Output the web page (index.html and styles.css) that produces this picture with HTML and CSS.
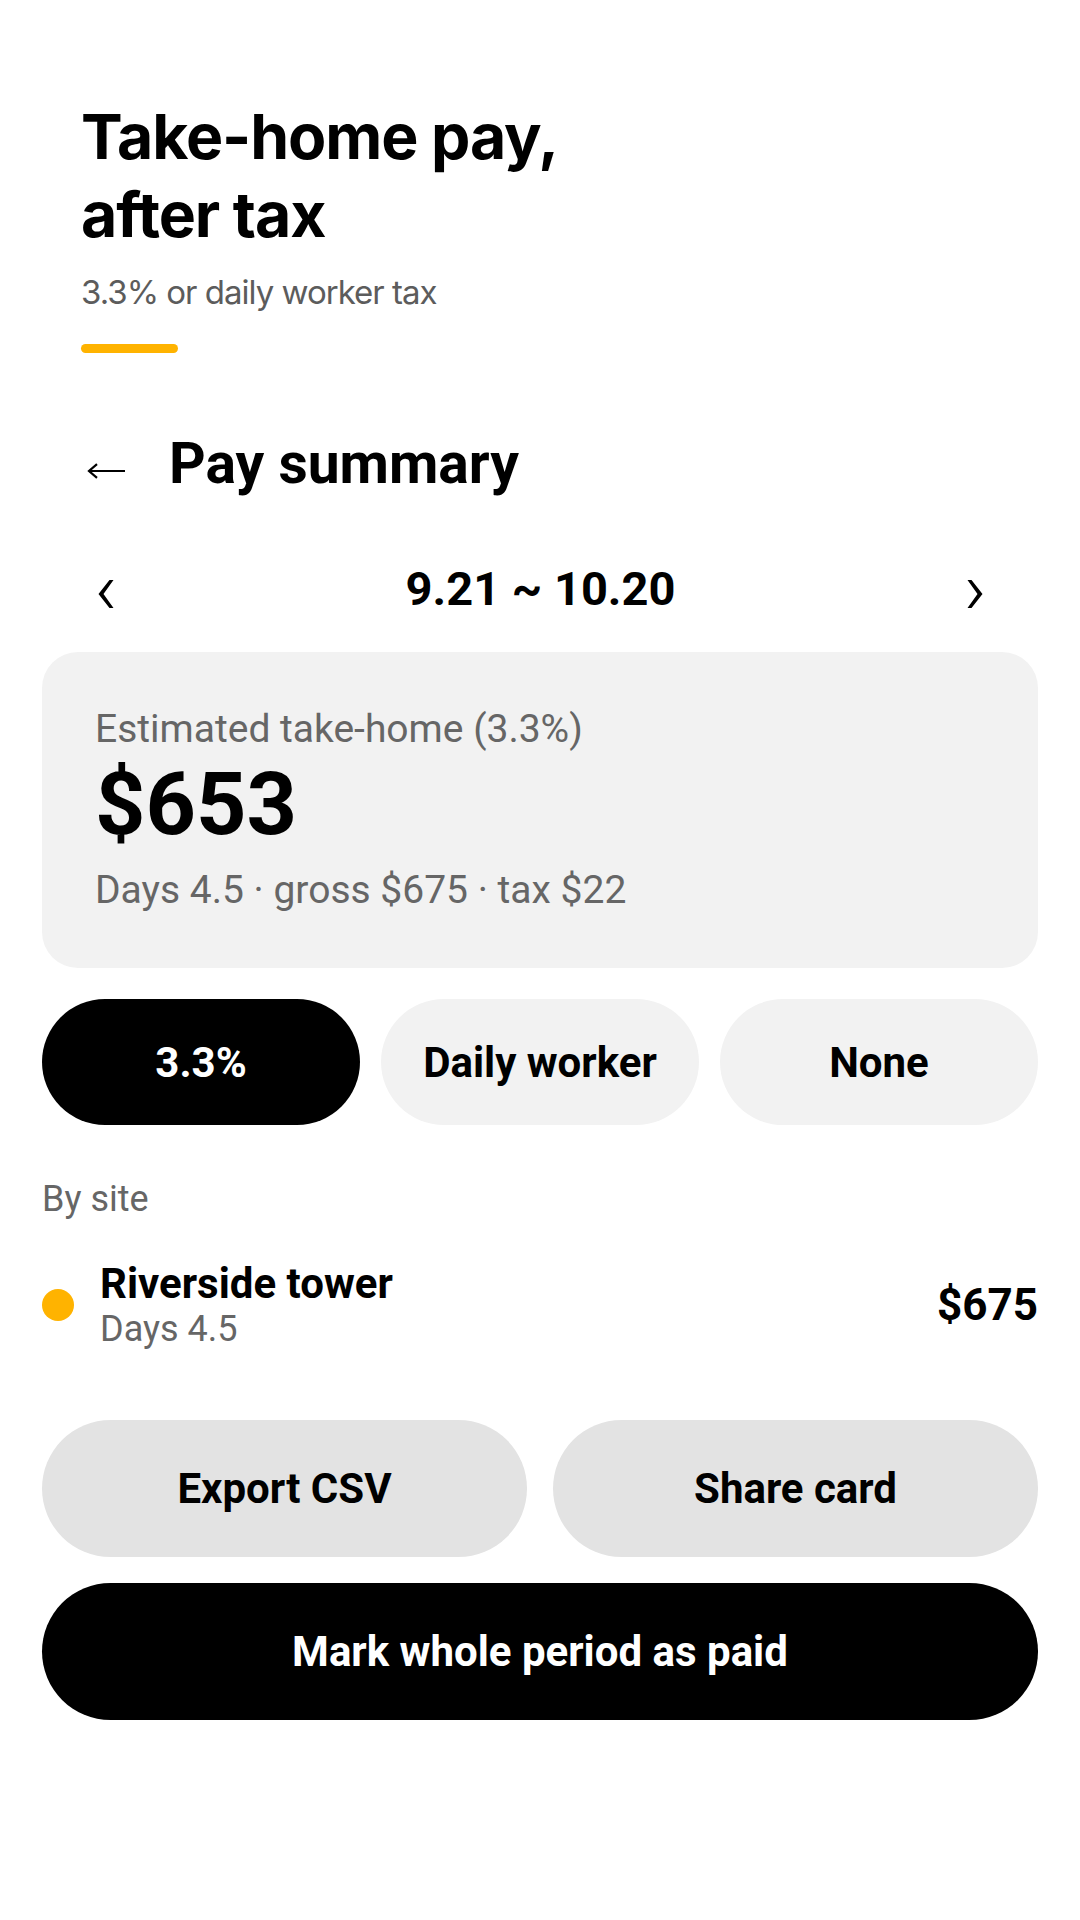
FILE: index.html
```html
<!DOCTYPE html>
<html lang="en">
<head>
<meta charset="utf-8">
<title>Pay summary</title>
<link rel="stylesheet" href="styles.css">
</head>
<body>
<div class="screen">
  <header class="hero">
    <h1 class="hero-title">Take-home pay,<br>after tax</h1>
    <p class="hero-sub">3.3% or daily worker tax</p>
    <div class="hero-bar"></div>
  </header>

  <div class="topbar">
    <svg class="back" width="38" height="16" viewBox="0 0 38 16" aria-hidden="true">
      <path d="M2 8 H38 M10 1.2 L2 8 L10 14.8" fill="none" stroke="#000" stroke-width="2.2" stroke-linecap="butt" stroke-linejoin="miter"/>
    </svg>
    <h2 class="topbar-title">Pay summary</h2>
  </div>

  <div class="period">
    <svg class="chev" width="16" height="28" viewBox="0 0 16 28" aria-hidden="true">
      <polygon points="11.5,0 15.5,0 5.5,14 15.5,28 11.5,28 0.5,14" fill="#000"/>
    </svg>
    <span class="period-label">9.21 ~ 10.20</span>
    <svg class="chev" width="16" height="28" viewBox="0 0 16 28" aria-hidden="true">
      <polygon points="4.5,0 0.5,0 10.5,14 0.5,28 4.5,28 15.5,14" fill="#000"/>
    </svg>
  </div>

  <section class="card">
    <div class="card-label">Estimated take-home (3.3%)</div>
    <div class="card-amount">$653</div>
    <div class="card-meta">Days 4.5 · gross $675 · tax $22</div>
  </section>

  <div class="tabs">
    <button class="tab tab-active">3.3%</button>
    <button class="tab">Daily worker</button>
    <button class="tab">None</button>
  </div>

  <div class="section-label">By site</div>

  <div class="site-row">
    <span class="site-dot"></span>
    <div class="site-info">
      <div class="site-name">Riverside tower</div>
      <div class="site-days">Days 4.5</div>
    </div>
    <div class="site-amount">$675</div>
  </div>

  <div class="actions">
    <button class="btn btn-secondary">Export CSV</button>
    <button class="btn btn-secondary">Share card</button>
  </div>
  <button class="btn btn-primary">Mark whole period as paid</button>
</div>
</body>
</html>
```

FILE: styles.css
```css
* { box-sizing: border-box; }

html, body {
  margin: 0;
  padding: 0;
  background: #ffffff;
}

body {
  width: 1080px;
  min-height: 1920px;
  font-family: Roboto, "Liberation Sans", sans-serif;
  color: #000;
}

.screen {
  padding: 0 42px;
  display: flex;
  flex-direction: column;
}

/* Hero */
.hero {
  padding-top: 97px;
  padding-left: 39px;
}

.hero-title {
  margin: 0;
  font-family: Inter, "Liberation Sans", sans-serif;
  font-weight: 700;
  font-size: 62.5px;
  line-height: 78px;
  letter-spacing: -1.1px;
}

.hero-sub {
  margin: 19px 0 0;
  font-family: Inter, "Liberation Sans", sans-serif;
  font-weight: 400;
  font-size: 33px;
  line-height: 40px;
  letter-spacing: -1px;
  color: #5c5c5c;
}

.hero-bar {
  margin-top: 32px;
  width: 97px;
  height: 9px;
  border-radius: 5px;
  background: #ffb300;
}

/* Top bar */
.topbar {
  margin-top: 78px;
  padding-left: 45px;
  display: flex;
  align-items: center;
  gap: 44px;
}

.back {
  display: block;
  margin-top: 14px;
}

.topbar-title {
  margin: 0;
  font-size: 57px;
  line-height: 66px;
  font-weight: 700;
}

/* Period */
.period {
  margin-top: 64px;
  padding: 0 55px 0 56px;
  display: flex;
  align-items: center;
  justify-content: space-between;
  height: 56px;
}

.chev {
  display: block;
  margin-top: 10px;
}

.period-label {
  font-size: 47px;
  line-height: 56px;
  font-weight: 700;
}

/* Card */
.card {
  margin-top: 35px;
  background: #f2f2f2;
  border-radius: 36px;
  padding: 54px 53px 55px;
}

.card-label {
  font-size: 39px;
  line-height: 46px;
  color: #666666;
}

.card-amount {
  font-size: 88px;
  line-height: 103px;
  font-weight: 700;
}

.card-meta {
  margin-top: 12px;
  font-size: 39px;
  line-height: 46px;
  color: #666666;
}

/* Tabs */
.tabs {
  margin-top: 31px;
  display: grid;
  grid-template-columns: 1fr 1fr 1fr;
  gap: 21px;
}

.tab {
  height: 126px;
  border: none;
  border-radius: 63px;
  background: #f2f2f2;
  color: #000;
  font-family: Roboto, "Liberation Sans", sans-serif;
  font-size: 42px;
  font-weight: 700;
  padding: 0;
}

.tab-active {
  background: #000;
  color: #fff;
}

/* By site */
.section-label {
  margin-top: 52px;
  font-size: 36px;
  line-height: 44px;
  color: #666666;
}

.site-row {
  margin-top: 38px;
  display: flex;
  align-items: center;
}

.site-dot {
  width: 32px;
  height: 32px;
  border-radius: 50%;
  background: #ffb300;
  flex: 0 0 auto;
}

.site-info {
  margin-left: 26px;
  flex: 1 1 auto;
}

.site-name {
  font-size: 42px;
  line-height: 49px;
  font-weight: 700;
}

.site-days {
  font-size: 36px;
  line-height: 43px;
  color: #666666;
}

.site-amount {
  font-size: 44px;
  line-height: 52px;
  font-weight: 700;
}

/* Buttons */
.actions {
  margin-top: 69px;
  display: grid;
  grid-template-columns: 1fr 1fr;
  gap: 26px;
}

.btn {
  height: 137px;
  border: none;
  border-radius: 69px;
  font-family: Roboto, "Liberation Sans", sans-serif;
  font-size: 42px;
  font-weight: 700;
  padding: 0;
}

.btn-secondary {
  background: #e3e3e3;
  color: #000;
}

.btn-primary {
  margin-top: 26px;
  width: 100%;
  background: #000;
  color: #fff;
}
```
